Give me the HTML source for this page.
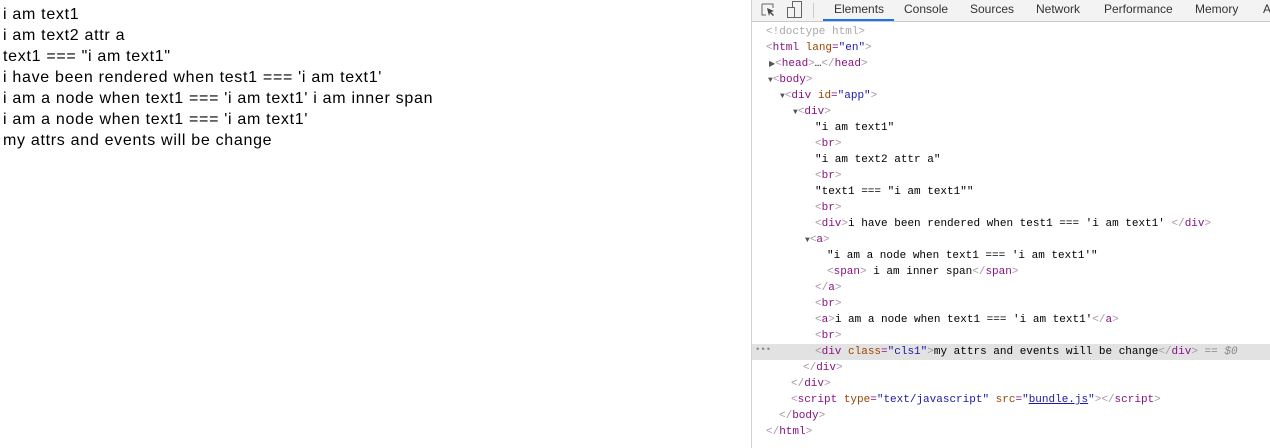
<!DOCTYPE html>
<html><head><style>
html,body{margin:0;padding:0;width:1270px;height:448px;overflow:hidden;background:#fff;}
#page{position:absolute;left:3px;top:4px;font:16px/21px "Liberation Sans",sans-serif;letter-spacing:0.7px;color:#000;white-space:nowrap;}
#dt{position:absolute;left:751px;top:0;width:519px;height:448px;border-left:1px solid #d0d0d0;background:#fff;}
#tb{position:absolute;left:0;top:0;width:519px;height:21px;background:#f3f3f3;border-bottom:1px solid #cccccc;font:12px "Liberation Sans",sans-serif;color:#333;}
.tab{position:absolute;top:2px;}
.sel{position:absolute;left:71px;top:19px;width:71px;height:2px;background:#1a73e8;}
#tree{position:absolute;left:0;top:24px;width:519px;font:11px/16px "Liberation Mono",monospace;}
.l{position:relative;height:16px;white-space:pre;}
.t{color:#881280}.b{color:#a894a6}.an{color:#994500}.av{color:#1a1aa6}.c{color:#a9a9a9}
.hl{background:#e2e2e2;}
.tri{font-size:8px;color:#555;}
</style></head><body>
<div id="page">i am text1<br>i am text2 attr a<br>text1 === "i am text1"<br>i have been rendered when test1 === 'i am text1'<br>i am a node when text1 === 'i am text1' i am inner span<br>i am a node when text1 === 'i am text1'<br>my attrs and events will be change</div>
<div id="dt">
<div id="tb">
<svg style="position:absolute;left:9px;top:3px" width="16" height="15" viewBox="0 0 16 15"><path d="M1 1h11v4M1 1v11h4" fill="none" stroke="#666" stroke-width="1"/><path d="M6 5l7 3-3 1 3 3-1 1-3-3-1 3z" fill="#444"/></svg>
<svg style="position:absolute;left:35px;top:1px" width="16" height="18" viewBox="0 0 16 18"><rect x="5.5" y="0.5" width="9" height="16" fill="none" stroke="#666"/><rect x="0.5" y="6.5" width="7" height="10" fill="#f3f3f3" stroke="#666"/></svg>
<div style="position:absolute;left:61px;top:3px;width:1px;height:15px;background:#ccc"></div>
<span class="tab" style="left:82px;color:#333">Elements</span>
<span class="tab" style="left:152px">Console</span>
<span class="tab" style="left:218px">Sources</span>
<span class="tab" style="left:284px">Network</span>
<span class="tab" style="left:352px">Performance</span>
<span class="tab" style="left:443px">Memory</span>
<span class="tab" style="left:511px">A</span>
<div class="sel"></div>
</div>
<div id="tree"><div class="l" style="padding-left:14px"><span class="c">&lt;!doctype html&gt;</span></div><div class="l" style="padding-left:14px"><span class="b">&lt;</span><span class="t">html</span> <span class="an">lang</span><span class="t">=</span><span class="av">"en"</span><span class="b">&gt;</span></div><div class="l" style="padding-left:17px"><span class="tri">▶</span><span class="b">&lt;</span><span class="t">head</span><span class="b">&gt;</span>…<span class="b">&lt;/</span><span class="t">head</span><span class="b">&gt;</span></div><div class="l" style="padding-left:16px"><span class="tri">▼</span><span class="b">&lt;</span><span class="t">body</span><span class="b">&gt;</span></div><div class="l" style="padding-left:28px"><span class="tri">▼</span><span class="b">&lt;</span><span class="t">div</span> <span class="an">id</span><span class="t">=</span><span class="av">"app"</span><span class="b">&gt;</span></div><div class="l" style="padding-left:41px"><span class="tri">▼</span><span class="b">&lt;</span><span class="t">div</span><span class="b">&gt;</span></div><div class="l" style="padding-left:63px">"i am text1"</div><div class="l" style="padding-left:63px"><span class="b">&lt;</span><span class="t">br</span><span class="b">&gt;</span></div><div class="l" style="padding-left:63px">"i am text2 attr a"</div><div class="l" style="padding-left:63px"><span class="b">&lt;</span><span class="t">br</span><span class="b">&gt;</span></div><div class="l" style="padding-left:63px">"text1 === "i am text1""</div><div class="l" style="padding-left:63px"><span class="b">&lt;</span><span class="t">br</span><span class="b">&gt;</span></div><div class="l" style="padding-left:63px"><span class="b">&lt;</span><span class="t">div</span><span class="b">&gt;</span>i have been rendered when test1 === 'i am text1' <span class="b">&lt;/</span><span class="t">div</span><span class="b">&gt;</span></div><div class="l" style="padding-left:53px"><span class="tri">▼</span><span class="b">&lt;</span><span class="t">a</span><span class="b">&gt;</span></div><div class="l" style="padding-left:75px">"i am a node when text1 === 'i am text1'"</div><div class="l" style="padding-left:75px"><span class="b">&lt;</span><span class="t">span</span><span class="b">&gt;</span> i am inner span<span class="b">&lt;/</span><span class="t">span</span><span class="b">&gt;</span></div><div class="l" style="padding-left:63px"><span class="b">&lt;/</span><span class="t">a</span><span class="b">&gt;</span></div><div class="l" style="padding-left:63px"><span class="b">&lt;</span><span class="t">br</span><span class="b">&gt;</span></div><div class="l" style="padding-left:63px"><span class="b">&lt;</span><span class="t">a</span><span class="b">&gt;</span>i am a node when text1 === 'i am text1'<span class="b">&lt;/</span><span class="t">a</span><span class="b">&gt;</span></div><div class="l" style="padding-left:63px"><span class="b">&lt;</span><span class="t">br</span><span class="b">&gt;</span></div><div class="l hl" style="padding-left:63px"><span style="position:absolute;left:3px;top:-2px;color:#888;font-size:9px">•••</span><span class="b">&lt;</span><span class="t">div</span> <span class="an">class</span><span class="t">=</span><span class="av">"cls1"</span><span class="b">&gt;</span>my attrs and events will be change<span class="b">&lt;/</span><span class="t">div</span><span class="b">&gt;</span> <span style="color:#888">== <i>$0</i></span></div><div class="l" style="padding-left:51px"><span class="b">&lt;/</span><span class="t">div</span><span class="b">&gt;</span></div><div class="l" style="padding-left:39px"><span class="b">&lt;/</span><span class="t">div</span><span class="b">&gt;</span></div><div class="l" style="padding-left:39px"><span class="b">&lt;</span><span class="t">script</span> <span class="an">type</span><span class="t">=</span><span class="av">"text/javascript"</span> <span class="an">src</span><span class="t">=</span><span class="av">"<u>bundle.js</u>"</span><span class="b">&gt;&lt;/</span><span class="t">script</span><span class="b">&gt;</span></div><div class="l" style="padding-left:27px"><span class="b">&lt;/</span><span class="t">body</span><span class="b">&gt;</span></div><div class="l" style="padding-left:14px"><span class="b">&lt;/</span><span class="t">html</span><span class="b">&gt;</span></div></div>
</div>
</body></html>
